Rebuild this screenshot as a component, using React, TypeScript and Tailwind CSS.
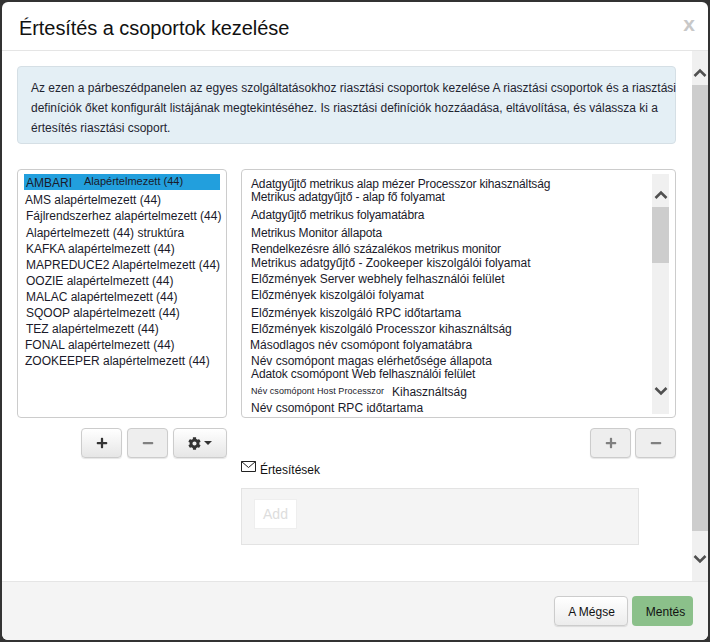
import React from "react";
import { FaPlus, FaMinus, FaCog } from "react-icons/fa";

const leftItems = [
  { t: "AMS alapértelmezett (44)", cls: "h-[16px] -ml-px" },
  { t: "Fájlrendszerhez alapértelmezett (44)", cls: "h-[17px]" },
  { t: "Alapértelmezett (44) struktúra", cls: "h-[16px]" },
  { t: "KAFKA alapértelmezett (44)", cls: "h-[16px]" },
  { t: "MAPREDUCE2 Alapértelmezett (44)", cls: "h-[16px]" },
  { t: "OOZIE alapértelmezett (44)", cls: "h-[16px]" },
  { t: "MALAC alapértelmezett (44)", cls: "h-[16px]" },
  { t: "SQOOP alapértelmezett (44)", cls: "h-[16px]" },
  { t: "TEZ alapértelmezett (44)", cls: "h-[16px]" },
  { t: "FONAL alapértelmezett (44)", cls: "h-[16px] -ml-px" },
  { t: "ZOOKEEPER alapértelmezett (44)", cls: "h-[16px] -ml-px" },
];

const rightItems: { text: React.ReactNode; cls: string }[] = [
  { text: "Adatgyűjtő metrikus alap mézer Processzor kihasználtság", cls: "h-[13px] tracking-[-0.15px]" },
  { text: "Metrikus adatgyűjtő - alap fő folyamat", cls: "h-[13px] tracking-[-0.15px]" },
  { text: "Adatgyűjtő metrikus folyamatábra", cls: "h-[18px] pt-[5px] tracking-[-0.15px]" },
  { text: "Metrikus Monitor állapota", cls: "h-[18px] pt-[5px] tracking-[-0.12px]" },
  { text: "Rendelkezésre álló százalékos metrikus monitor", cls: "h-[16px] pt-[3px] tracking-[-0.15px]" },
  { text: "Metrikus adatgyűjtő - Zookeeper kiszolgálói folyamat", cls: "h-[14px] pt-[1px]" },
  { text: "Előzmények Server webhely felhasználói felület", cls: "h-[16px] pt-[3px]" },
  { text: "Előzmények kiszolgálói folyamat", cls: "h-[16px] pt-[3px]" },
  { text: "Előzmények kiszolgáló RPC időtartama", cls: "h-[18px] pt-[5px]" },
  { text: "Előzmények kiszolgáló Processzor kihasználtság", cls: "h-[16px] pt-[3px]" },
  { text: "Másodlagos név csomópont folyamatábra", cls: "h-[16px] pt-[3px] -ml-px" },
  { text: "Név csomópont magas elérhetősége állapota", cls: "h-[16px] pt-[3px]" },
  { text: "Adatok csomópont Web felhasználói felület", cls: "h-[13px] tracking-[-0.12px]" },
  {
    text: (
      <span className="flex items-center">
        <span className="-translate-y-px text-[9px] tracking-[0.07px]">Név csomópont Host Processzor</span>
        <span className="ml-[8px]">Kihasználtság</span>
      </span>
    ),
    cls: "h-[18px] pt-[5px]",
  },
  { text: "Név csomópont RPC időtartama", cls: "h-[16px] pt-[3px]" },
];

function Chevron({ up, className }: { up?: boolean; className?: string }) {
  return (
    <svg width="14" height="10" viewBox="0 0 14 10" className={className}>
      <path
        d={up ? "M1.5 8 L7 2.5 L12.5 8" : "M1.5 2 L7 7.5 L12.5 2"}
        fill="none"
        stroke="#505050"
        strokeWidth="2.6"
      />
    </svg>
  );
}

function IconButton({ children, disabled, className }: { children: React.ReactNode; disabled?: boolean; className: string }) {
  return (
    <button
      className={
        "flex h-[30px] items-center justify-center rounded-[4px] border border-[#ccc] shadow-[0_1px_1px_rgba(0,0,0,0.1)] " +
        (disabled ? "bg-[#eee] text-[#808080] " : "bg-gradient-to-b from-white to-[#e6e6e6] text-[#333] ") +
        className
      }
    >
      {children}
    </button>
  );
}

export default function App() {
  return (
    <div className="h-[642px] w-[710px] overflow-hidden bg-[#333] p-[2px] font-['Liberation_Sans',Arial,sans-serif] text-[12px] text-[#1a1a2a]">
      <div className="flex h-[638px] w-[706px] flex-col overflow-hidden rounded-[6px] bg-white">
        <header className="flex h-[49px] shrink-0 items-center justify-between border-b border-[#e5e5e5] pl-[17px] pr-[13px] pt-[3px]">
          <h1 className="text-[20px] leading-[24px] tracking-[-0.07px] text-[#111]">Értesítés a csoportok kezelése</h1>
          <span className="mb-[8px] text-[21px] font-bold leading-none text-[#c8c8c8]">x</span>
        </header>

        <div className="flex min-h-0 flex-1">
          <div className="w-[690px] shrink-0 pl-[15px] pt-[15px]">
            <div className="h-[78px] w-[659px] rounded-[4px] border border-[#d5dfe5] bg-[#e4eff5] pl-[13px] pt-[11px] text-[12px] leading-[20px] text-[#1f2430]">
              <p className="whitespace-nowrap">Az ezen a párbeszédpanelen az egyes szolgáltatásokhoz riasztási csoportok kezelése A riasztási csoportok és a riasztási</p>
              <p className="whitespace-nowrap">definíciók őket konfigurált listájának megtekintéséhez. Is riasztási definíciók hozzáadása, eltávolítása, és válassza ki a</p>
              <p className="whitespace-nowrap">értesítés riasztási csoport.</p>
            </div>

            <div className="mt-[25px] flex items-start">
              <div className="w-[210px]">
                <div className="h-[249px] rounded-[4px] border border-[#ccc] pl-[6px] pt-[4px] leading-[16px]">
                  <div className="mb-[2px] flex h-[16px] w-[196px] items-center bg-[#229fdd] pl-[2px]">
                    <span className="translate-y-px">AMBARI</span>
                    <span className="ml-[12px] -translate-y-px text-[11px]">Alapértelmezett (44)</span>
                  </div>
                  {leftItems.map((r) => (
                    <div key={r.t} className={"whitespace-nowrap pl-[2px] " + r.cls}>{r.t}</div>
                  ))}
                </div>
                <div className="mt-[10px] flex justify-end gap-[5px]">
                  <IconButton className="w-[41px]"><FaPlus size={12} /></IconButton>
                  <IconButton disabled className="w-[41px]"><FaMinus size={12} /></IconButton>
                  <IconButton className="w-[54px] gap-[3px]">
                    <FaCog size={13} />
                    <span className="h-0 w-0 border-x-[4px] border-t-[4px] border-x-transparent border-t-[#333]" />
                  </IconButton>
                </div>
              </div>

              <div className="ml-[14px] w-[435px]">
                <div className="flex h-[249px] items-start rounded-[4px] border border-[#ccc] pl-[9px] pt-[8px]">
                  <div className="w-[401px] leading-[13px]">
                    {rightItems.map((r, i) => (
                      <div key={i} className={"whitespace-nowrap " + r.cls}>{r.text}</div>
                    ))}
                  </div>
                  <div className="-mt-[4px] flex h-[240px] w-[17px] shrink-0 flex-col items-center bg-[#f0f0f0]">
                    <Chevron up className="mt-[16px]" />
                    <div className="mt-[7px] h-[56px] w-full bg-[#cdcdcd]" />
                    <Chevron className="mt-[123px]" />
                  </div>
                </div>
                <div className="mt-[10px] flex justify-end gap-[4px]">
                  <IconButton disabled className="w-[41px]"><FaPlus size={12} /></IconButton>
                  <IconButton disabled className="w-[41px]"><FaMinus size={12} /></IconButton>
                </div>
                <div className="mt-[1px] flex h-[17px] items-center">
                  <svg width="15" height="11" viewBox="0 0 15 11" className="mb-[3px]">
                    <path d="M0.5 0.5H14.5V10.5H0.5Z M0.5 0.5L7.5 6.5L14.5 0.5" fill="none" stroke="#222" />
                  </svg>
                  <span className="ml-[4px] translate-y-[2px] text-[#111]">Értesítések</span>
                </div>
                <div className="mt-[12px] h-[57px] w-[398px] border border-[#e3e3e3] bg-[#f4f4f4] pl-[12px] pt-[10px]">
                  <div className="flex h-[30px] w-[43px] items-center justify-center border border-[#eee] bg-white text-[#ddd]">
                    <span className="text-[14px]">Add</span>
                  </div>
                </div>
              </div>
            </div>
          </div>

          <div className="flex h-[530px] w-[16px] shrink-0 flex-col items-center bg-[#f0f0f0]">
            <Chevron up className="mt-[17px]" />
            <div className="mt-[7px] h-[446px] w-full bg-[#cdcdcd]" />
            <Chevron className="mt-[23px]" />
          </div>
        </div>

        <footer className="flex h-[59px] shrink-0 items-start justify-end gap-[4px] border-t border-[#e5e5e5] bg-[#f4f4f4] pr-[15px] pt-[14px]">
          <button className="h-[30px] w-[74px] rounded-[4px] border border-[#ccc] bg-gradient-to-b from-white to-[#ececec] pl-[1px] pt-[2px] text-[#111] shadow-[0_1px_1px_rgba(0,0,0,0.1)]">A Mégse</button>
          <button className="h-[30px] w-[61px] rounded-[4px] bg-[#8bc08a] pl-[6px] pt-[2px] text-[#111]">Mentés</button>
        </footer>
      </div>
    </div>
  );
}
